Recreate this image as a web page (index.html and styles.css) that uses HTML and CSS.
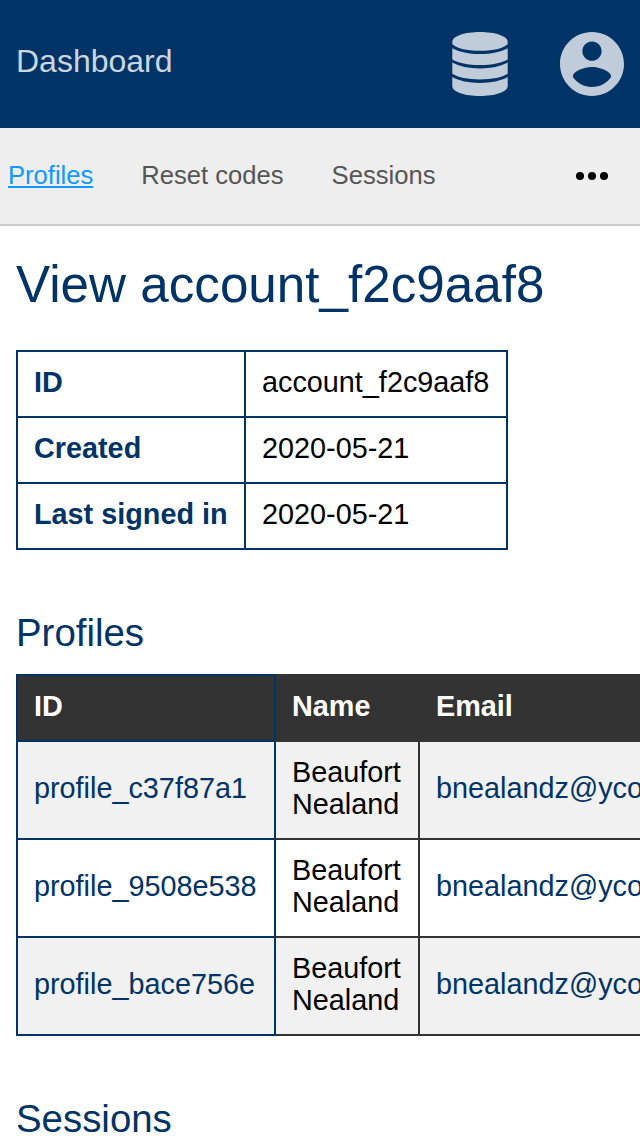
FILE: index.html
```html
<!DOCTYPE html>
<html lang="en">
<head>
<meta charset="utf-8">
<title>View account</title>
<link rel="stylesheet" href="styles.css">
</head>
<body>
<header class="topbar">
  <a class="brand">Dashboard</a>
  <div class="top-icons">
    <svg class="icon-db" viewBox="0 0 56 64"><path d="M0.300 9.700C0.300 4 13 0 28 0S55.700 4 55.700 9.700V12C52 16 42 18.800 28 18.800S4 16 0.300 12Z"/><path d="M0.300 16.200C7 20 17 22 28 22S49 20 55.700 16.200V27.500C50 31 40 33 28 33S6 31 0.300 27.500Z"/><path d="M0.300 30.600C7 34.500 17 36.500 28 36.500S49 34.500 55.700 30.600V41.700C50 45.300 40 47.400 28 47.400S6 45.300 0.300 41.700Z"/><path d="M0.300 45C7 49 17 50.900 28 50.900S49 49 55.700 45V54C55.700 60 43 64 28 64S0.300 60 0.300 54Z"/></svg>
    <svg class="icon-user" viewBox="2 2 20 20"><path d="M12 2C6.480 2 2 6.480 2 12s4.480 10 10 10 10-4.480 10-10S17.520 2 12 2zm0 3c1.660 0 3 1.340 3 3s-1.340 3-3 3-3-1.340-3-3 1.340-3 3-3zm0 14.200c-2.500 0-4.710-1.280-6-3.220.03-1.990 4-3.080 6-3.080 1.990 0 5.970 1.090 6 3.080-1.290 1.940-3.500 3.220-6 3.220z"/></svg>
  </div>
</header>
<nav class="subnav">
  <a class="tab active">Profiles</a>
  <a class="tab">Reset codes</a>
  <a class="tab">Sessions</a>
  <svg class="more" viewBox="0 0 32 8"><circle cx="4" cy="4" r="4"/><circle cx="16" cy="4" r="4"/><circle cx="28" cy="4" r="4"/></svg>
</nav>
<main class="content">
  <h1 class="title">View account_f2c9aaf8</h1>
  <table class="details">
    <tr><th>ID</th><td>account_f2c9aaf8</td></tr>
    <tr><th>Created</th><td>2020-05-21</td></tr>
    <tr><th>Last signed in</th><td>2020-05-21</td></tr>
  </table>
  <h2 class="section">Profiles</h2>
  <div class="scroller">
    <table class="list">
      <colgroup><col class="col-id"><col class="col-name"><col></colgroup>
      <thead><tr><th class="key">ID</th><th>Name</th><th>Email</th></tr></thead>
      <tbody>
        <tr><td class="key"><a>profile_c37f87a1</a></td><td>Beaufort Nealand</td><td><a>bnealandz@ycombinator.com</a></td></tr>
        <tr><td class="key"><a>profile_9508e538</a></td><td>Beaufort Nealand</td><td><a>bnealandz@ycombinator.com</a></td></tr>
        <tr><td class="key"><a>profile_bace756e</a></td><td>Beaufort Nealand</td><td><a>bnealandz@ycombinator.com</a></td></tr>
      </tbody>
    </table>
  </div>
  <h2 class="section">Sessions</h2>
</main>
</body>
</html>
```
FILE: styles.css
```css
* { box-sizing: border-box; }
body {
  margin: 0;
  height: 1136px;
  overflow: hidden;
  background: #fff;
  color: #000;
  font-family: "Liberation Sans", Arial, sans-serif;
  font-size: 28.8px;
  line-height: 32px;
}
.topbar {
  display: flex;
  justify-content: space-between;
  align-items: center;
  height: 128px;
  padding: 0 16px;
  background: #003366;
}
.brand {
  padding-bottom: 6px;
  color: #ccd6e0;
  font-size: 32px;
  line-height: 36px;
}
.top-icons { display: flex; gap: 52px; fill: #c0ccd9; }
.icon-db { width: 56px; height: 64px; }
.icon-user { width: 64px; height: 64px; }
.subnav {
  display: flex;
  align-items: center;
  gap: 48px;
  height: 98px;
  padding: 0 32px 0 8px;
  background: #eee;
  border-bottom: 2px solid #ccc;
}
.tab { padding-bottom: 2px; color: #555; font-size: 25.6px; }
.active {
  color: #1199ff;
  text-decoration: underline;
  text-decoration-thickness: 2px;
  text-underline-offset: 2px;
}
.more { width: 32px; height: 8px; margin-left: auto; }
.content { padding: 0 16px; }
.title {
  margin: 29px 0 35px;
  color: #003366;
  font-size: 51.2px;
  font-weight: 400;
  line-height: 60px;
}
.section {
  margin: 60px 0 18px;
  color: #003366;
  font-size: 38.4px;
  font-weight: 400;
  line-height: 46px;
}
table { border-collapse: collapse; table-layout: fixed; }
th, td { padding: 14px 16px 18px; text-align: left; }
.details { width: 492px; }
.details th { width: 228px; color: #003366; }
.details th, .details td { border: 2px solid #003366; }
.scroller { margin-right: -16px; overflow: hidden; }
.list { width: 806px; }
.col-id { width: 258px; }
.col-name { width: 144px; }
.list th, .list td { border: 2px solid #333; }
.list th { background: #333; color: #fff; }
.list .key { border-color: #003366; }
.list a { color: #003366; }
.list tbody tr:nth-child(odd) { background: #f1f1f1; }
```
